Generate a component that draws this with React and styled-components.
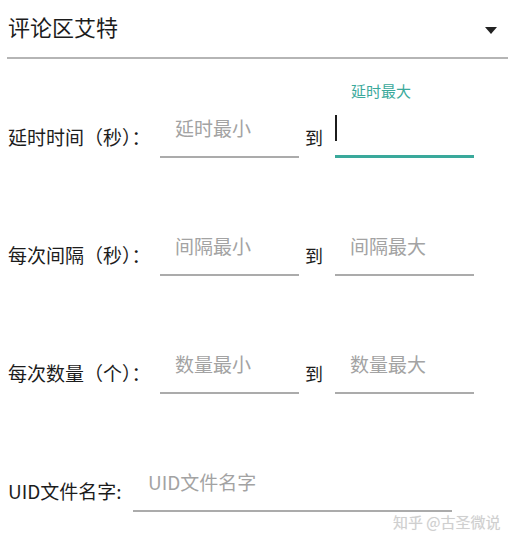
import React from 'react';
import styled, { createGlobalStyle } from 'styled-components';

const GlobalStyle = createGlobalStyle`
    body {
        margin: 0;
        background: #fff;
        font-family: "Noto Sans CJK SC", "Noto Sans", sans-serif;
    }
`;

const rows = [
  { label: '延时时间（秒）：', min: '延时最小', max: '延时最大', active: true },
  { label: '每次间隔（秒）：', min: '间隔最小', max: '间隔最大' },
  { label: '每次数量（个）：', min: '数量最小', max: '数量最大' },
];

export default function App() {
  return (
    <Page>
        <GlobalStyle />
        <Spinner>
            <SpinnerText>评论区艾特</SpinnerText>
            <Caret />
        </Spinner>
        <Divider />
        <Form>
            {rows.map((r) => (
                <Row key={r.label}>
                    <Label>{r.label}</Label>
                    <Field>
                        <Hint>{r.min}</Hint>
                    </Field>
                    <To>到</To>
                    {r.active ? (
                        <ActiveField>
                            <FloatLabel>{r.max}</FloatLabel>
                            <InputArea>
                                <Cursor />
                            </InputArea>
                        </ActiveField>
                    ) : (
                        <Field>
                            <Hint>{r.max}</Hint>
                        </Field>
                    )}
                </Row>
            ))}
            <Row>
                <Label $width={125}>UID文件名字:</Label>
                <Field $width={319}>
                    <Hint>UID文件名字</Hint>
                </Field>
            </Row>
        </Form>
        <Watermark>知乎 @古圣微说</Watermark>
    </Page>
  );
}

const Page = styled.div`
    position: relative;
    width: 517px;
    height: 545px;
    overflow: hidden;
    background: #fff;
`;

const Spinner = styled.div`
    display: flex;
    align-items: flex-start;
    justify-content: space-between;
    box-sizing: border-box;
    height: 57px;
    padding: 13px 20px 0 8px;
`;

const SpinnerText = styled.div`
    font-size: 22px;
    line-height: 26px;
    color: #1c1c1c;
`;

const Caret = styled.div`
    width: 0;
    height: 0;
    margin-top: 14px;
    border-left: 6.5px solid transparent;
    border-right: 6.5px solid transparent;
    border-top: 7px solid #222;
`;

const Divider = styled.div`
    height: 2px;
    margin: 0 9px 0 7px;
    background: #b5b5b5;
`;

const Form = styled.div`
    display: flex;
    flex-direction: column;
    gap: 19px;
`;

const Row = styled.div`
    display: flex;
    align-items: flex-end;
    height: 99px;
    padding-left: 8px;
`;

const Label = styled.div`
    width: ${(p) => p.$width || 152}px;
    margin-bottom: 10px;
    font-size: 19px;
    line-height: 23px;
    color: #1c1c1c;
    white-space: nowrap;
`;

const Field = styled.div`
    box-sizing: border-box;
    width: ${(p) => p.$width || 139}px;
    padding: 0 0 17px 15px;
    border-bottom: 2px solid #ababab;
`;

const Hint = styled.div`
    font-size: 19px;
    line-height: 23px;
    color: #a3a3a3;
    white-space: nowrap;
`;

const To = styled.div`
    box-sizing: border-box;
    width: 36px;
    padding-left: 6px;
    margin-bottom: 10px;
    font-size: 18px;
    line-height: 22px;
    color: #1c1c1c;
`;

const ActiveField = styled.div`
    box-sizing: border-box;
    display: flex;
    flex-direction: column;
    width: 139px;
    border-bottom: 3px solid #3aa99b;
`;

const FloatLabel = styled.div`
    padding-left: 16px;
    font-size: 15px;
    line-height: 18px;
    color: #3aa99b;
`;

const InputArea = styled.div`
    padding: 15px 0 14px;
`;

const Cursor = styled.div`
    width: 2px;
    height: 26px;
    background: #1c1c1c;
`;

const Watermark = styled.div`
    position: absolute;
    left: 393px;
    top: 512px;
    font-size: 15px;
    line-height: 20px;
    color: #cfcfcf;
    text-shadow: 0 0 1px rgba(0, 0, 0, 0.08);
    white-space: nowrap;
`;
